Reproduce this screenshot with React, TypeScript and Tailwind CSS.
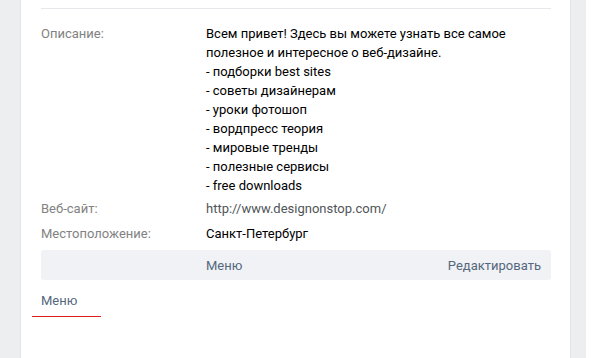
export default function App() {
  const lines = [
    "Всем привет! Здесь вы можете узнать все самое",
    "полезное и интересное о веб-дизайне.",
    "- подборки best sites",
    "- советы дизайнерам",
    "- уроки фотошоп",
    "- вордпресс теория",
    "- мировые тренды",
    "- полезные сервисы",
    "- free downloads",
  ];

  return (
    <div className="flex h-[358px] w-[600px] bg-[#edeef0] font-['Roboto',sans-serif] text-[13px] leading-[19px]">
      <div className="ml-[20px] w-[551px] border-x border-[#e3e4e8] bg-white pl-[20px] pr-[19px]">
        <div className="mt-[8px] h-px bg-[#e7e8ec]" />

        {/* Info rows */}
        <div className="mt-[15px] flex">
          <div className="w-[165px] text-[#828282]">Описание:</div>
          <div className="text-black">
            {lines.map((l) => (
              <div key={l}>{l}</div>
            ))}
          </div>
        </div>
        <div className="mt-[4px] flex">
          <div className="w-[165px] text-[#828282]">Веб-сайт:</div>
          <div className="text-[#505558]">http://www.designonstop.com/</div>
        </div>
        <div className="mt-[6px] flex">
          <div className="w-[165px] text-[#828282]">Местоположение:</div>
          <div className="text-black">Санкт-Петербург</div>
        </div>

        {/* Menu bar */}
        <div className="mt-[7px] flex h-[30px] items-center justify-between rounded-[3px] bg-[#f0f2f5] pl-[165px] pr-[10px] text-[#55677d]">
          <span>Меню</span>
          <span>Редактировать</span>
        </div>

        {/* Tab */}
        <div className="-ml-[9px] flex">
          <div className="w-[69px] border-b border-[#e01e1e] pb-[6px] pl-[9px] pt-[11px] text-[#55677d]">
            Меню
          </div>
        </div>
      </div>
      <div className="w-[15px]" />
      <div className="flex-1 bg-white" />
    </div>
  );
}
